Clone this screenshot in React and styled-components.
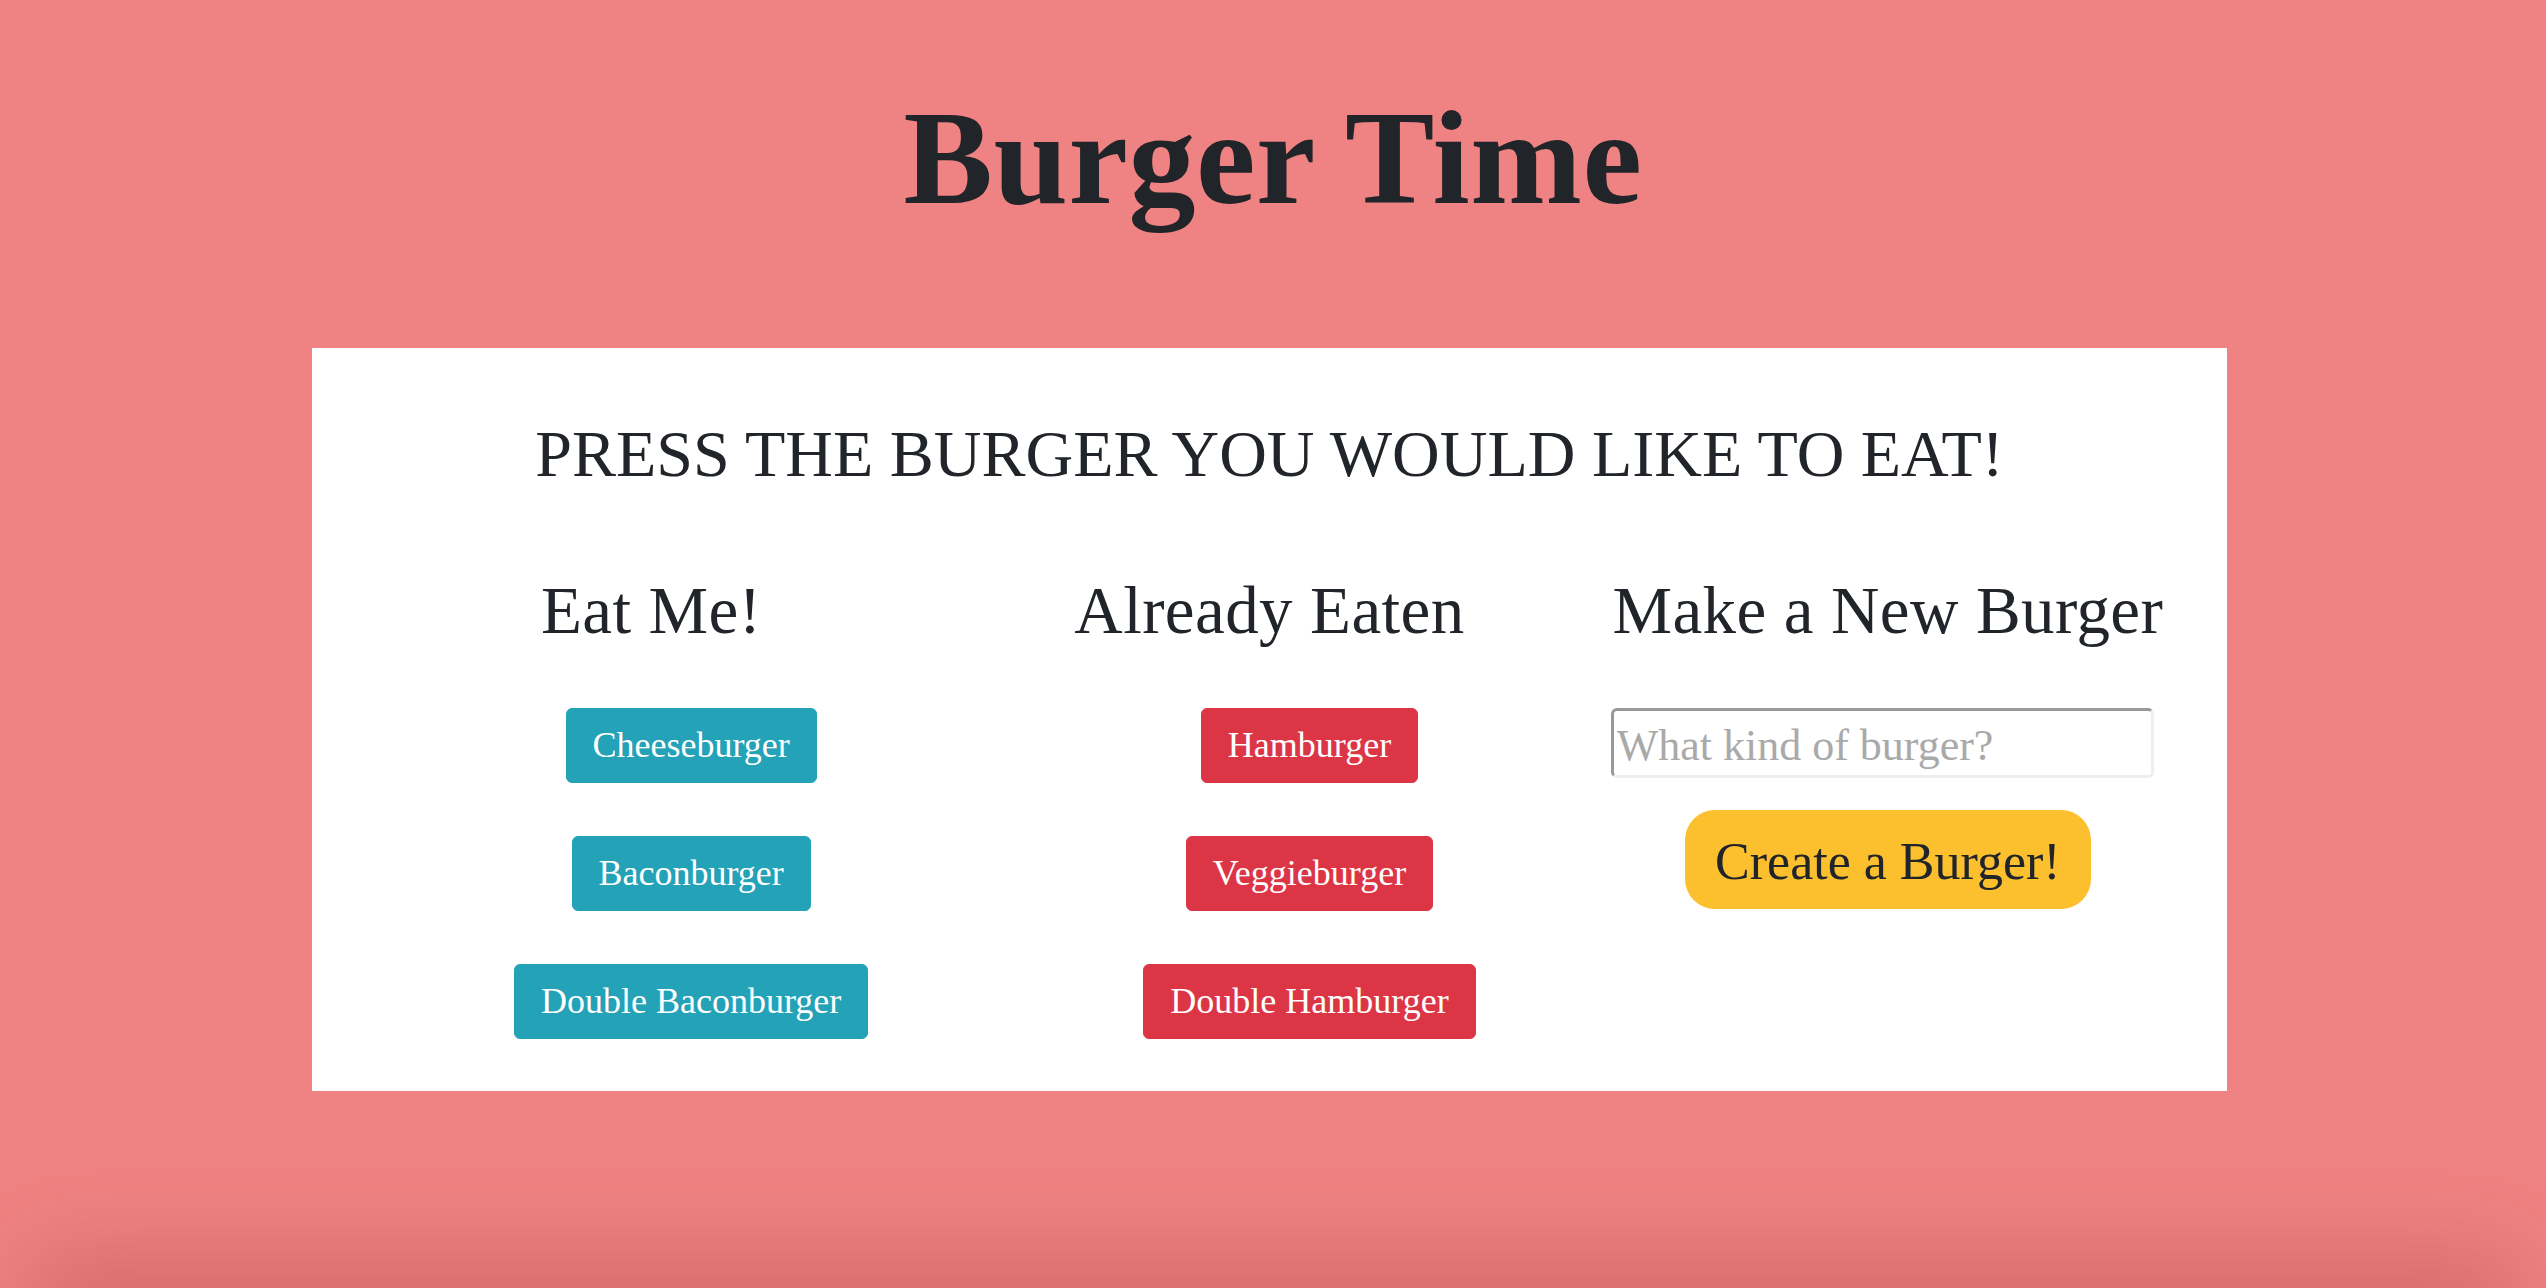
import React from 'react'
import styled, {createGlobalStyle} from 'styled-components';

const uneaten = ['Cheeseburger', 'Baconburger', 'Double Baconburger']
const eaten = ['Hamburger', 'Veggieburger', 'Double Hamburger']

const App = () => {
    return (
        <Page>
            <GlobalStyle/>
            <Title>Burger Time</Title>
            <Card>
                <Prompt>PRESS THE BURGER YOU WOULD LIKE TO EAT!</Prompt>
                <Columns>
                    <Column>
                        <ColumnTitle>Eat Me!</ColumnTitle>
                        <BurgerList>
                            {uneaten.map(name => (
                                <li key={name}><BurgerBtn variant="info">{name}</BurgerBtn></li>
                            ))}
                        </BurgerList>
                    </Column>
                    <Column>
                        <ColumnTitle>Already Eaten</ColumnTitle>
                        <BurgerList>
                            {eaten.map(name => (
                                <li key={name}><BurgerBtn variant="danger">{name}</BurgerBtn></li>
                            ))}
                        </BurgerList>
                    </Column>
                    <Column>
                        <ColumnTitle>Make a New Burger</ColumnTitle>
                        <BurgerForm onSubmit={e => e.preventDefault()}>
                            <BurgerInput type="text" placeholder="What kind of burger?"/>
                            <CreateBtn type="submit">Create a Burger!</CreateBtn>
                        </BurgerForm>
                    </Column>
                </Columns>
            </Card>
            <BottomShade/>
        </Page>
    );
}

export default App;

const GlobalStyle = createGlobalStyle`
  html, body {
    margin: 0;
    padding: 0;
    background: #ef8282;
    color: #212529;
    font-family: "Liberation Serif", "Times New Roman", serif;
  }
  body {
    min-height: 1288px;
    overflow: hidden;
  }
`

const Page = styled.div`
  padding-top: 78px;
  min-height: 1288px;
  box-sizing: border-box;
`

const Title = styled.h1`
  margin: 0 0 110px;
  text-align: center;
  font-size: 134px;
  line-height: 160px;
  font-weight: 700;
  letter-spacing: 0.5px;
`

const Card = styled.div`
  width: 1915px;
  margin: 0 0 0 calc(50% - 961px);
  background: #fff;
  box-sizing: border-box;
  padding: 66px 30px 52px;
`

const Prompt = styled.h2`
  margin: 0 0 76px;
  text-align: center;
  font-size: 66px;
  line-height: 80px;
  font-weight: 400;
`

const Columns = styled.div`
  display: grid;
  grid-template-columns: repeat(3, 1fr);
`

const Column = styled.div`
  display: flex;
  flex-direction: column;
`

const ColumnTitle = styled.h3`
  margin: 0 0 58px;
  text-align: center;
  font-size: 67px;
  line-height: 80px;
  font-weight: 400;
  letter-spacing: 0.4px;
`

const BurgerList = styled.ul`
  list-style: none;
  margin: 0;
  padding: 0 0 0 80px;
  display: flex;
  flex-direction: column;
  align-items: center;
  gap: 53px;
`

const BurgerBtn = styled.button`
  height: 75px;
  padding: 0 26px;
  border: 1px solid ${props => props.variant === 'danger' ? '#dc3545' : '#23a2b8'};
  border-radius: 6px;
  background: ${props => props.variant === 'danger' ? '#dc3545' : '#23a2b8'};
  color: #fff;
  font-family: inherit;
  font-size: 36px;
  line-height: 73px;
  cursor: pointer;
`

const BurgerForm = styled.form`
  display: flex;
  flex-direction: column;
  align-items: center;
  gap: 32px;
`

const BurgerInput = styled.input`
  align-self: flex-start;
  margin-left: 32px;
  width: 543px;
  height: 70px;
  box-sizing: border-box;
  padding: 4px 3px 0;
  border: 3px solid;
  border-color: #999 #eee #eee #999;
  border-radius: 6px;
  font-family: inherit;
  font-size: 44px;
  color: #212529;
  outline: none;

  &::placeholder {
    color: #a9a9a9;
  }
`

const CreateBtn = styled.button`
  height: 99px;
  padding: 4px 30px 0;
  border: none;
  border-radius: 30px;
  background: #fcc02e;
  color: #212529;
  font-family: inherit;
  font-size: 52px;
  line-height: 95px;
  cursor: pointer;
`

const BottomShade = styled.div`
  position: fixed;
  left: 60px;
  right: 60px;
  bottom: -40px;
  height: 40px;
  box-shadow: 0 0 90px 30px rgba(150, 50, 50, 0.3);
  pointer-events: none;
`
